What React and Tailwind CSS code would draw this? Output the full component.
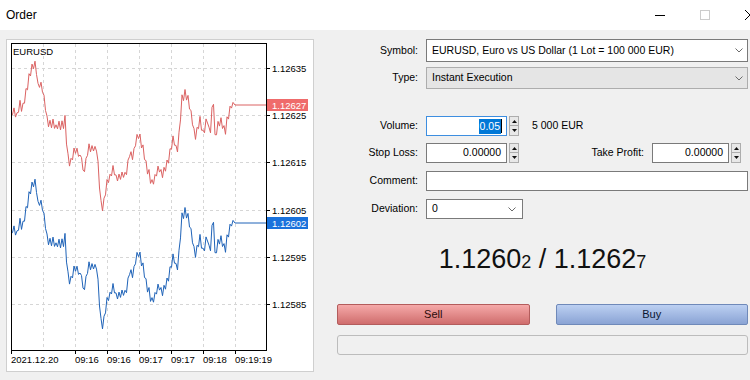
const bidKeys = [
  [11, 235], [13, 228], [17, 233], [20, 222], [23, 226], [26, 212], [28, 200], [30, 190], [33, 183], [35, 182],
  [37, 190], [38, 205], [40, 200], [43, 210], [46, 228], [48, 243], [52, 240], [56, 246], [60, 242], [63, 245],
  [65, 238], [67, 265], [68, 277], [70, 282], [73, 272], [76, 268], [80, 275], [82, 272], [83, 290], [86, 280],
  [88, 267], [92, 266], [97, 267], [99, 295], [101, 320], [102, 330], [104, 318], [107, 300], [110, 295], [113, 287],
  [117, 297], [121, 295], [125, 292], [127, 287], [130, 270], [133, 277], [135, 262], [138, 252], [141, 260], [143, 265],
  [146, 283], [150, 295], [153, 302], [157, 290], [160, 288], [163, 293], [166, 285], [170, 272], [173, 258], [176, 265],
  [178, 267], [180, 240], [182, 218], [185, 213], [188, 218], [190, 223], [193, 245], [195, 257], [198, 243], [200, 237],
  [203, 253], [205, 244], [207, 233], [209, 250], [210, 255], [212, 230], [213, 205], [214, 230], [215, 255], [218, 244],
  [220, 238], [223, 246], [225, 250], [228, 235], [231, 224], [232, 218], [234, 226], [235, 223],
]

const rnd = (i) => {
  const s = Math.sin(i * 12.9898) * 43758.5453
  return s - Math.floor(s)
}

// tick line: follow the key points with an up/down jitter
const buildLine = (offset) => {
  const pts = []
  let k = 0
  let n = 0
  for (let x = 11; x <= 234; x += 1.5) {
    while (k < bidKeys.length - 2 && bidKeys[k + 1][0] < x) k++
    const [x0, y0] = bidKeys[k]
    const [x1, y1] = bidKeys[k + 1]
    const t = x1 === x0 ? 0 : (x - x0) / (x1 - x0)
    const base = y0 + (y1 - y0) * t
    const amp = 1.5 + rnd(n + 3) * 4
    const y = base + (n % 2 ? amp : -amp)
    pts.push(`${x.toFixed(2)},${(y + offset).toFixed(1)}`)
    n++
  }
  pts.push(`235,${223 + offset}`, `266,${223 + offset}`)
  return pts.join(" ")
}

const priceLevels = [
  [68, "1.12635"],
  [115, "1.12625"],
  [162, "1.12615"],
  [210, "1.12605"],
  [257, "1.12595"],
  [304, "1.12585"],
]
const gridX = [43, 75, 107, 139, 171, 203, 235]
const timeTicks = [
  [11, "2021.12.20"],
  [75, "09:16"],
  [107, "09:16"],
  [139, "09:17"],
  [171, "09:17"],
  [203, "09:18"],
  [235, "09:19:19"],
]

const Chart = () => (
  <svg width="306" height="331" viewBox="7 40 306 331" style={{ fontFamily: "'Liberation Sans', Arial, sans-serif" }}>
    {priceLevels.map(([y]) => (
      <line key={y} x1="12" x2="266" y1={y + 0.5} y2={y + 0.5} stroke="#d6d6d6" strokeDasharray="3 3" />
    ))}
    {gridX.map((x) => (
      <line key={x} x1={x + 0.5} x2={x + 0.5} y1="44" y2="350" stroke="#d6d6d6" strokeDasharray="3 3" />
    ))}
    <polyline points={buildLine(-118)} fill="none" stroke="#db6262" strokeWidth="1" />
    <polyline points={buildLine(0)} fill="none" stroke="#1f63b8" strokeWidth="1" />
    <rect x="11.5" y="43.5" width="255" height="307" fill="none" stroke="#000" />
    {priceLevels.map(([y, t]) => (
      <g key={t}>
        <line x1="266" x2="270" y1={y + 0.5} y2={y + 0.5} stroke="#000" />
        <text x="272" y={y + 3.5} fontSize="9.5" fill="#000">{t}</text>
      </g>
    ))}
    <rect x="267" y="99" width="41" height="12" fill="#ef6b6b" />
    <text x="272" y="108.5" fontSize="9.5" fill="#fff">1.12627</text>
    <rect x="267" y="217" width="41" height="12" fill="#1a72dc" />
    <text x="272" y="226.5" fontSize="9.5" fill="#fff">1.12602</text>
    {timeTicks.map(([x, t], i) => (
      <g key={i}>
        <line x1={x + 0.5} x2={x + 0.5} y1="350" y2="354" stroke="#000" />
        <text x={x} y="363" fontSize="9.5" fill="#000">{t}</text>
      </g>
    ))}
    <text x="13" y="55" fontSize="9.5" fill="#000">EURUSD</text>
  </svg>
)

const Chevron = () => (
  <svg width="8" height="5" viewBox="0 0 8 5">
    <polyline points="0.5,0.5 4,4 7.5,0.5" fill="none" stroke="#6b6b6b" strokeWidth="1" />
  </svg>
)

const Spin = () => (
  <div className="ml-[2px] w-[10px] h-[20px] flex flex-col shrink-0">
    <div className="h-[10px] border border-[#adadad] bg-[#e8e8e8] flex items-center justify-center">
      <svg width="5" height="3" viewBox="0 0 5 3"><path d="M0 3 L2.5 0 L5 3Z" fill="#111" /></svg>
    </div>
    <div className="h-[10px] border border-t-0 border-[#adadad] bg-[#e8e8e8] flex items-center justify-center">
      <svg width="5" height="3" viewBox="0 0 5 3"><path d="M0 0 L2.5 3 L5 0Z" fill="#111" /></svg>
    </div>
  </div>
)

const Label = ({ children, w = "w-[81px]" }) => (
  <span className={`${w} text-right shrink-0`}>{children}</span>
)

export default function App() {
  return (
    <div className="w-[750px] h-[380px] overflow-hidden bg-[#f0f0f0] text-black font-['Liberation_Sans',Arial,sans-serif]">
      <div className="h-[30px] bg-white flex items-center overflow-hidden">
        <span className="pl-[6px] text-[12px]">Order</span>
        <div className="ml-auto flex shrink-0 mr-[-22px]">
          <div className="w-[45px] h-[30px] flex items-center justify-center">
            <div className="w-[10px] h-[1px] bg-black" />
          </div>
          <div className="w-[45px] h-[30px] flex items-center justify-center">
            <div className="w-[10px] h-[10px] border border-[#cccccc]" />
          </div>
          <div className="w-[45px] h-[30px] flex items-center justify-center">
            <svg width="10" height="10" viewBox="0 0 10 10">
              <path d="M0 0 L10 10 M10 0 L0 10" stroke="#000" strokeWidth="1" />
            </svg>
          </div>
        </div>
      </div>

      <div className="flex pt-[9px]">
        <div className="ml-[6px] w-[308px] h-[333px] border border-[#cfcfcf] bg-white shrink-0">
          <Chart />
        </div>

        <div className="ml-[23px] w-[411px] text-[10.5px]">
          <div className="flex items-center h-[23px]">
            <Label>Symbol:</Label>
            <div className="ml-[8px] w-[322px] h-[23px] bg-white border border-[#7a7a7a] flex items-center justify-between pl-[5px] pr-[4px]">
              <span>EURUSD, Euro vs US Dollar (1 Lot = 100 000 EUR)</span>
              <Chevron />
            </div>
          </div>

          <div className="flex items-center h-[22px] mt-[5px]">
            <Label>Type:</Label>
            <div className="ml-[8px] w-[322px] h-[22px] bg-[#e5e5e5] border border-[#adadad] flex items-center justify-between pl-[5px] pr-[4px]">
              <span>Instant Execution</span>
              <Chevron />
            </div>
          </div>

          <div className="flex items-center h-[20px] mt-[27px]">
            <Label>Volume:</Label>
            <div className="ml-[8px] w-[81px] h-[20px] bg-white border border-[#3d8ee0] flex items-center justify-end pr-[4px]">
              <span className="bg-[#0078d7] text-white px-[1px] leading-[15px]">0.05</span>
              <span className="w-[1px] h-[14px] bg-black" />
            </div>
            <Spin />
            <span className="ml-[13px]">5 000 EUR</span>
          </div>

          <div className="flex items-center h-[20px] mt-[7px]">
            <Label>Stop Loss:</Label>
            <div className="ml-[8px] w-[81px] h-[20px] bg-white border border-[#7a7a7a] flex items-center justify-end pr-[5px]">
              0.00000
            </div>
            <Spin />
            <Label w="w-[125px]">Take Profit:</Label>
            <div className="ml-[8px] w-[77px] h-[20px] bg-white border border-[#7a7a7a] flex items-center justify-end pr-[5px]">
              0.00000
            </div>
            <Spin />
          </div>

          <div className="flex items-center h-[20px] mt-[8px]">
            <Label>Comment:</Label>
            <div className="ml-[8px] w-[322px] h-[20px] bg-white border border-[#7a7a7a]" />
          </div>

          <div className="flex items-center h-[20px] mt-[8px]">
            <Label>Deviation:</Label>
            <div className="ml-[8px] w-[97px] h-[20px] bg-white border border-[#7a7a7a] flex items-center justify-between pl-[5px] pr-[6px]">
              <span>0</span>
              <Chevron />
            </div>
          </div>

          <div className="mt-[25px] h-[30px] leading-[30px] text-center text-[27px] text-[#111]">
            1.1260<span className="text-[18px]">2</span> / 1.1262<span className="text-[18px]">7</span>
          </div>

          <div className="mt-[30px] grid grid-cols-2 gap-[26px] h-[21px] text-[11px]">
            <div className="rounded-[2px] border border-[#b35c5c] bg-gradient-to-b from-[#f5a9a9] to-[#cf6d6d] flex items-center justify-center text-[#2a0a0a]">
              Sell
            </div>
            <div className="rounded-[2px] border border-[#6f89b9] bg-gradient-to-b from-[#bcd0f2] to-[#8aa3d4] flex items-center justify-center text-[#0a1530]">
              Buy
            </div>
          </div>

          <div className="mt-[10px] h-[20px] border border-[#bcbcbc] rounded-[3px] bg-[#f0f0f0]" />
        </div>
      </div>
    </div>
  )
}
